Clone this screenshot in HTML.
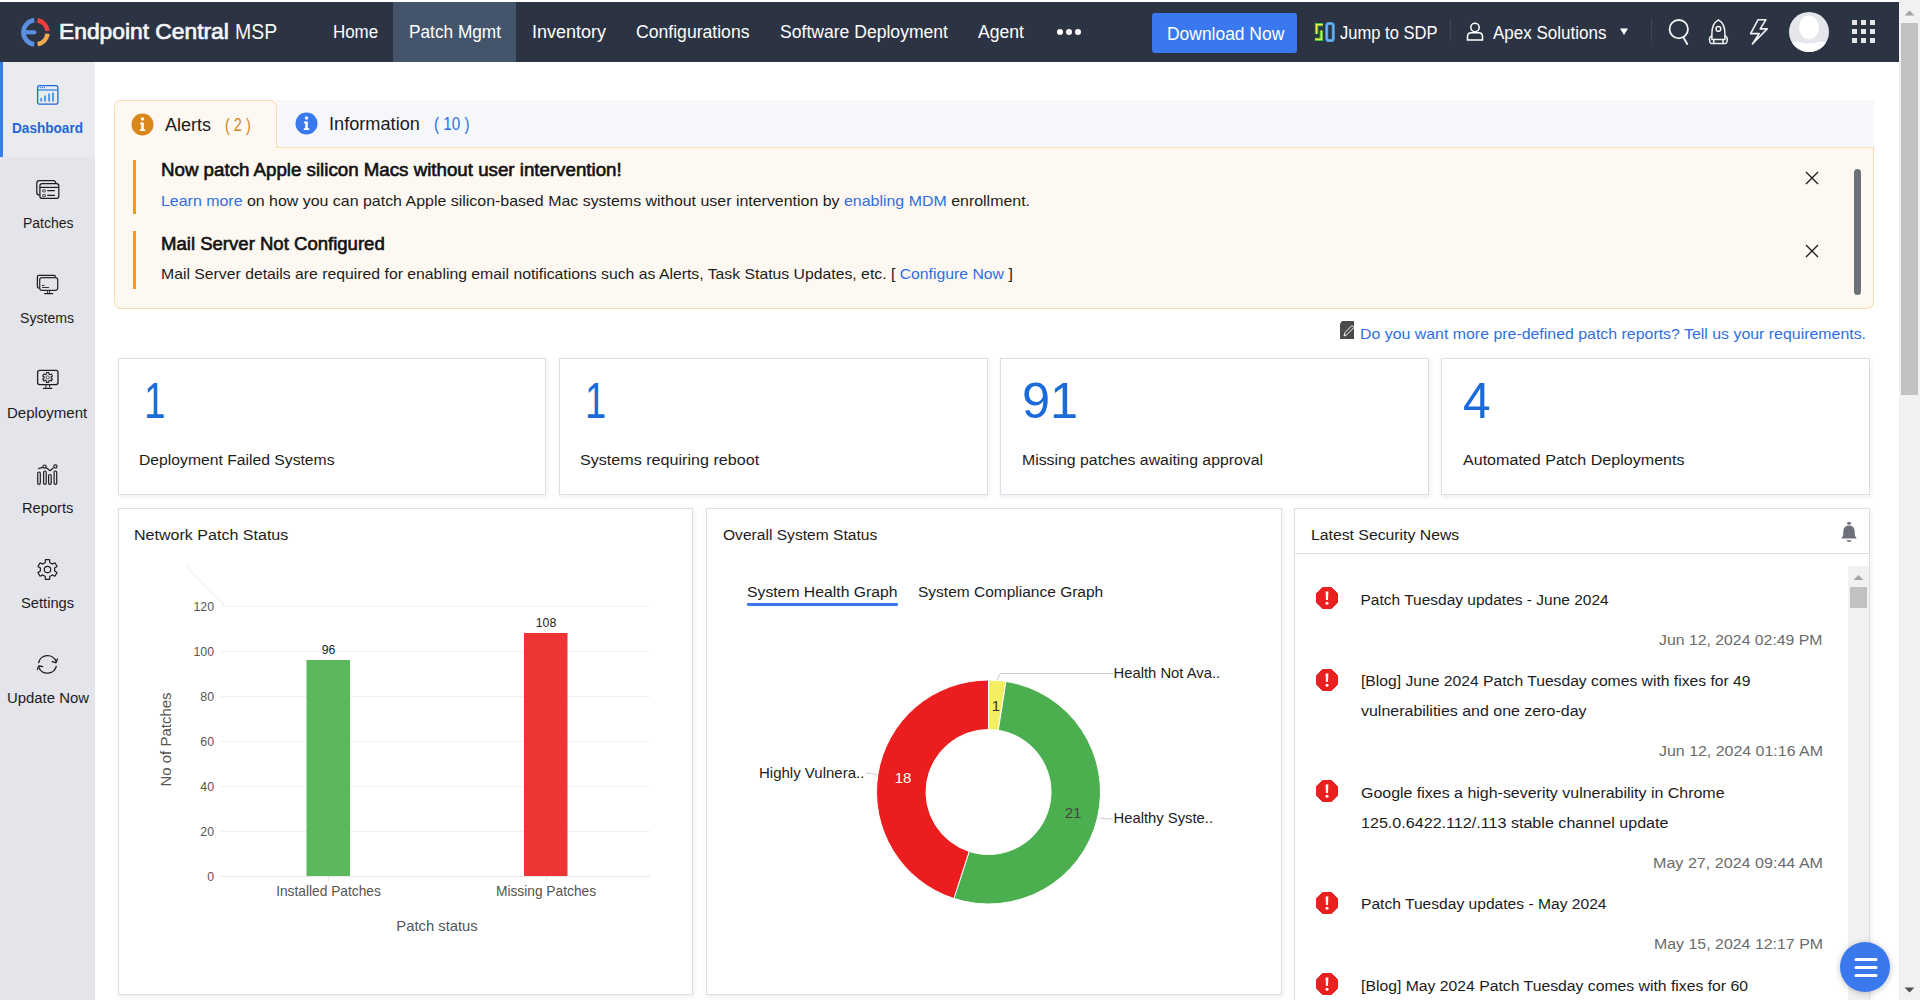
<!DOCTYPE html>
<html><head><meta charset="utf-8"><title>Endpoint Central MSP</title>
<style>
*{box-sizing:border-box}
html,body{margin:0;padding:0;width:1920px;height:1000px;overflow:hidden;background:#fff;font-family:"Liberation Sans",sans-serif}
.t{position:absolute;white-space:nowrap;transform-origin:0 0}
.a{position:absolute}
</style></head><body>
<div class="a" style="left:0;top:0;width:1899px;height:2px;background:#fff"></div><div class="a" style="left:0;top:2px;width:1899px;height:60px;background:#2c3444"></div><div class="a" style="left:393px;top:2px;width:123px;height:60px;background:#44546a"></div><svg class="a" style="left:15px;top:12px" width="40" height="40" viewBox="0 0 40 40"><path d="M19.24 32.33 A12.10 12.10 0 0 1 19.24 8.27" fill="none" stroke="#5a8fe2" stroke-width="4.6"/><path d="M22.60 8.38 A12.10 12.10 0 0 1 32.53 19.04" fill="none" stroke="#ef3f3c" stroke-width="4.6"/><path d="M32.51 21.77 A12.10 12.10 0 0 1 22.60 32.22" fill="none" stroke="#f1aa4c" stroke-width="4.6"/><path d="M8 20.30 H19.3" stroke="#5a8fe2" stroke-width="4.2"/><circle cx="19.3" cy="20.30" r="2.1" fill="#5a8fe2"/></svg><div class="t" style="left:58.60px;top:22.00px;font-size:21.5px;line-height:21.5px;font-weight:normal;color:#f6f6f6;transform:scaleX(1.0603);-webkit-text-stroke:0.7px #f6f6f6;">Endpoint Central</div>
<div class="t" style="left:234.80px;top:22.00px;font-size:21.5px;line-height:21.5px;font-weight:normal;color:#f6f6f6;transform:scaleX(0.9056);">MSP</div>
<div class="t" style="left:332.90px;top:24.00px;font-size:17.5px;line-height:17.5px;font-weight:normal;color:#fff;transform:scaleX(0.9657);">Home</div>
<div class="t" style="left:409.00px;top:24.00px;font-size:17.5px;line-height:17.5px;font-weight:normal;color:#fff;transform:scaleX(0.9855);">Patch Mgmt</div>
<div class="t" style="left:532.00px;top:24.00px;font-size:17.5px;line-height:17.5px;font-weight:normal;color:#fff;transform:scaleX(1.0278);">Inventory</div>
<div class="t" style="left:636.00px;top:24.00px;font-size:17.5px;line-height:17.5px;font-weight:normal;color:#fff;transform:scaleX(1.0058);">Configurations</div>
<div class="t" style="left:779.50px;top:24.00px;font-size:17.5px;line-height:17.5px;font-weight:normal;color:#fff;transform:scaleX(1.0042);">Software Deployment</div>
<div class="t" style="left:978.00px;top:24.00px;font-size:17.5px;line-height:17.5px;font-weight:normal;color:#fff;transform:scaleX(1.0055);">Agent</div>
<div class="a" style="left:1057px;top:29px;width:6px;height:6px;border-radius:3px;background:#fff"></div><div class="a" style="left:1066px;top:29px;width:6px;height:6px;border-radius:3px;background:#fff"></div><div class="a" style="left:1075px;top:29px;width:6px;height:6px;border-radius:3px;background:#fff"></div><div class="a" style="left:1152px;top:13px;width:145px;height:40px;border-radius:3px;background:#3a78f0"></div><div class="t" style="left:1166.70px;top:26.00px;font-size:17.5px;line-height:17.5px;font-weight:normal;color:#fff;transform:scaleX(0.9962);">Download Now</div>
<svg class="a" style="left:1313px;top:21px" width="24" height="23" viewBox="0 0 24 23">
<path d="M3.6 13 V3.6 H10" fill="none" stroke="#45c13a" stroke-width="3.4"/>
<path d="M8.4 9.6 V18.4 H2" fill="none" stroke="#45c13a" stroke-width="3.4"/>
<path d="M3.6 13 V3.6 H10 M8.4 9.6 V18.4 H2" fill="none" stroke="#f4ec4c" stroke-width="1.3"/>
<rect x="13.7" y="2.6" width="6.6" height="17" rx="2.2" fill="none" stroke="#4a9ee6" stroke-width="3"/>
<rect x="13.7" y="2.6" width="6.6" height="17" rx="2.2" fill="none" stroke="#7cbcf0" stroke-width="1"/>
</svg><div class="t" style="left:1340.00px;top:25.00px;font-size:17.5px;line-height:17.5px;font-weight:normal;color:#fff;transform:scaleX(0.9457);">Jump to SDP</div>
<div class="a" style="left:1450px;top:20px;width:1px;height:22px;border-left:1px dotted #556"></div><svg class="a" style="left:1466px;top:22px" width="18" height="19" viewBox="0 0 18 19">
<circle cx="9" cy="5.5" r="4.2" fill="none" stroke="#fff" stroke-width="1.5"/>
<path d="M1.5 18 V14.5 Q1.5 10.8 5.5 10.8 H12.5 Q16.5 10.8 16.5 14.5 V18 Z" fill="none" stroke="#fff" stroke-width="1.5"/>
</svg><div class="t" style="left:1492.50px;top:25.00px;font-size:17.5px;line-height:17.5px;font-weight:normal;color:#fff;transform:scaleX(0.9722);">Apex Solutions</div>
<svg class="a" style="left:1617px;top:27px" width="14" height="10" viewBox="0 0 14 10"><path d="M3 1.5 L11 1.5 L7 8 Z" fill="#fff"/></svg><div class="a" style="left:1651px;top:20px;width:1px;height:22px;border-left:1px dotted #556"></div><svg class="a" style="left:1660px;top:12px" width="120" height="40" viewBox="1660 12 120 40">
<circle cx="1678.75" cy="29.2" r="9.2" fill="none" stroke="#f2f2f2" stroke-width="1.8"/>
<path d="M1683.6 37.6 L1687.2 44" stroke="#f2f2f2" stroke-width="1.9" stroke-linecap="round"/>
<path d="M1718.4 19.8 C1714.2 22.2 1711.9 27 1711.9 33.2 V39.6 H1724.9 V33.2 C1724.9 27 1722.6 22.2 1718.4 19.8 Z" fill="none" stroke="#f2f2f2" stroke-width="1.5" stroke-linejoin="round"/>
<circle cx="1718.4" cy="28.9" r="2.4" fill="none" stroke="#f2f2f2" stroke-width="1.4"/>
<path d="M1711.9 35.6 L1710 37.4 Q1709.3 38.2 1709.5 39.4 L1710 42.4 Q1710.3 43.5 1711.6 43.5 H1713.6 L1713.9 39.6" fill="none" stroke="#f2f2f2" stroke-width="1.5" stroke-linejoin="round"/>
<path d="M1724.9 35.6 L1726.8 37.4 Q1727.5 38.2 1727.3 39.4 L1726.8 42.4 Q1726.5 43.5 1725.2 43.5 H1723.2 L1722.9 39.6" fill="none" stroke="#f2f2f2" stroke-width="1.5" stroke-linejoin="round"/>
<path d="M1713.6 43.5 H1723.2" stroke="#f2f2f2" stroke-width="1.5"/>
<path d="M1758 19.8 H1765.8 L1760.2 28.9 H1767.2 L1752.4 44 L1759.2 33.6 H1750.6 Z" fill="none" stroke="#f2f2f2" stroke-width="1.6" stroke-linejoin="round"/>
</svg><svg class="a" style="left:1789px;top:12px" width="40" height="40" viewBox="0 0 40 40">
<defs><clipPath id="av"><circle cx="20" cy="20" r="20"/></clipPath></defs>
<circle cx="20" cy="20" r="20" fill="#e4e6eb"/>
<g clip-path="url(#av)"><ellipse cx="20" cy="15.5" rx="9.8" ry="12" fill="#fff"/><path d="M0 44 V34 Q2 30 9 29.5 Q14 31.5 20 31.5 Q26 31.5 31 29.5 Q38 30 40 34 V44 Z" fill="#fff"/></g>
</svg><div class="a" style="left:1852px;top:20px;width:5px;height:5px;background:#e6e6ea"></div><div class="a" style="left:1861px;top:20px;width:5px;height:5px;background:#e6e6ea"></div><div class="a" style="left:1870px;top:20px;width:5px;height:5px;background:#e6e6ea"></div><div class="a" style="left:1852px;top:29px;width:5px;height:5px;background:#e6e6ea"></div><div class="a" style="left:1861px;top:29px;width:5px;height:5px;background:#e6e6ea"></div><div class="a" style="left:1870px;top:29px;width:5px;height:5px;background:#e6e6ea"></div><div class="a" style="left:1852px;top:38px;width:5px;height:5px;background:#e6e6ea"></div><div class="a" style="left:1861px;top:38px;width:5px;height:5px;background:#e6e6ea"></div><div class="a" style="left:1870px;top:38px;width:5px;height:5px;background:#e6e6ea"></div><div class="a" style="left:1899px;top:0;width:21px;height:1000px;background:#f1f1f1"></div><div class="a" style="left:1901px;top:23px;width:17px;height:372px;background:#c1c1c1"></div><svg class="a" style="left:1899px;top:0" width="21" height="20" viewBox="0 0 21 20"><path d="M5.5 15.5 L10.5 10.5 L15.5 15.5 Z" fill="#a3a3a3"/></svg><svg class="a" style="left:1899px;top:982px" width="21" height="20" viewBox="0 0 21 20"><path d="M5.5 5.5 L15.5 5.5 L10.5 10.5 Z" fill="#505050"/></svg><div class="a" style="left:0;top:62px;width:95px;height:938px;background:#e3e5ea"></div><div class="a" style="left:0;top:62px;width:95px;height:95px;background:#eaebef"></div><div class="a" style="left:0;top:62px;width:3px;height:95px;background:#3b7bf0"></div><svg class="a" style="left:30px;top:78px" width="35" height="35" viewBox="0 0 35 35">
<rect x="7.6" y="7.6" width="20.3" height="18.6" rx="1.8" fill="none" stroke="#1f66dc" stroke-width="1.3"/>
<path d="M7.6 12 H27.9" stroke="#3d8fe6" stroke-width="1.4"/>
<circle cx="10.3" cy="9.6" r="0.7" fill="#1f66dc"/><circle cx="12.4" cy="9.6" r="0.7" fill="#1f66dc"/><circle cx="14.4" cy="9.6" r="0.7" fill="#1f66dc"/>
<path d="M11.2 23.5 V20 M15.1 23.5 V17.4 M19.1 23.5 V15.4 M23 23.5 V14.4" stroke="#4a9ae6" stroke-width="1.9"/>
</svg><svg class="a" style="left:30px;top:172px" width="35" height="35" viewBox="0 0 35 35">
<path d="M9.5 23.2 Q6.8 23.2 6.8 20.5 V11.2 Q6.8 8.5 9.5 8.5 H23.3 Q25.8 8.5 25.8 11.4" fill="none" stroke="#1e1e1e" stroke-width="1.25"/>
<rect x="9.9" y="11.6" width="18.9" height="14.8" rx="2.2" fill="none" stroke="#1e1e1e" stroke-width="1.25"/>
<path d="M9.9 15.4 H28.8" stroke="#1e1e1e" stroke-width="1.2"/>
<rect x="12.6" y="17.8" width="2.8" height="2.1" rx="0.5" fill="none" stroke="#333" stroke-width="0.9"/>
<rect x="12.6" y="22.6" width="2.8" height="2.1" rx="0.5" fill="none" stroke="#333" stroke-width="0.9"/>
<path d="M17.3 18.6 H24.9 M17.3 23.4 H24.9" stroke="#1e1e1e" stroke-width="1.2"/>
</svg><svg class="a" style="left:30px;top:267px" width="35" height="35" viewBox="0 0 35 35">
<path d="M9 21 Q7.4 21 7.4 19.4 V9.8 Q7.4 8.3 9 8.3 H24.5 Q25.3 8.3 25.3 10" fill="none" stroke="#1e1e1e" stroke-width="1.25"/>
<rect x="9.7" y="10.5" width="18" height="12.8" rx="2.2" fill="none" stroke="#2a2a2a" stroke-width="1.25"/>
<path d="M17.6 23.3 V26 M19.6 23.3 V26" stroke="#333" stroke-width="1"/>
<path d="M14.6 26.6 H22.6" stroke="#1e1e1e" stroke-width="1.4" stroke-linecap="round"/>
<path d="M12 18.5 H14.6 M12 20.5 H19" stroke="#333" stroke-width="1"/>
</svg><svg class="a" style="left:30px;top:360px" width="35" height="35" viewBox="0 0 35 35">
<rect x="7.6" y="10.3" width="20.4" height="14.3" rx="2" fill="none" stroke="#1e1e1e" stroke-width="1.3"/>
<path d="M15.8 24.6 V27.6 M19.6 24.6 V27.6" stroke="#333" stroke-width="1.1"/>
<path d="M13.6 28.4 H21.6" stroke="#1e1e1e" stroke-width="1.4" stroke-linecap="round"/>
<path d="M15.80 14.28 L16.33 14.03 L16.44 12.43 L18.76 12.43 L18.87 14.03 L19.40 14.28 L19.88 14.62 L21.32 13.91 L22.48 15.93 L21.15 16.81 L21.20 17.40 L21.15 17.99 L22.48 18.87 L21.32 20.89 L19.88 20.18 L19.40 20.52 L18.87 20.77 L18.76 22.37 L16.44 22.37 L16.33 20.77 L15.80 20.52 L15.32 20.18 L13.88 20.89 L12.72 18.87 L14.05 17.99 L14.00 17.40 L14.05 16.81 L12.72 15.93 L13.88 13.91 L15.32 14.62 Z" fill="none" stroke="#1e1e1e" stroke-width="1.1" stroke-linejoin="round"/>
<circle cx="17.6" cy="17.4" r="1.6" fill="none" stroke="#444" stroke-width="0.9"/>
</svg><svg class="a" style="left:30px;top:457px" width="35" height="35" viewBox="0 0 35 35">
<rect x="7.7" y="15" width="2.6" height="12.4" rx="1.3" fill="none" stroke="#1e1e1e" stroke-width="1.2"/>
<rect x="13.6" y="14" width="2.6" height="13.4" rx="1.3" fill="none" stroke="#1e1e1e" stroke-width="1.2"/>
<rect x="18.6" y="17.5" width="2.6" height="9.9" rx="1.3" fill="none" stroke="#1e1e1e" stroke-width="1.2"/>
<rect x="24.1" y="14" width="2.6" height="13.4" rx="1.3" fill="none" stroke="#1e1e1e" stroke-width="1.2"/>
<path d="M8.3 11.6 L12.8 10.3 M16 10.5 L20 13.8 L23.6 10.6" fill="none" stroke="#1e1e1e" stroke-width="1.2"/>
<circle cx="14.5" cy="9.6" r="1.6" fill="none" stroke="#1e1e1e" stroke-width="1.2"/>
<circle cx="25.4" cy="9.4" r="1.6" fill="none" stroke="#1e1e1e" stroke-width="1.2"/>
</svg><svg class="a" style="left:30px;top:552px" width="35" height="35" viewBox="0 0 35 35">
<path d="M13.90 11.26 L15.19 10.68 L15.42 7.72 L19.58 7.72 L19.81 10.68 L21.10 11.26 L22.25 12.09 L24.93 10.81 L27.01 14.41 L24.56 16.10 L24.70 17.50 L24.56 18.90 L27.01 20.59 L24.93 24.19 L22.25 22.91 L21.10 23.74 L19.81 24.32 L19.58 27.28 L15.42 27.28 L15.19 24.32 L13.90 23.74 L12.75 22.91 L10.07 24.19 L7.99 20.59 L10.44 18.90 L10.30 17.50 L10.44 16.10 L7.99 14.41 L10.07 10.81 L12.75 12.09 Z" fill="none" stroke="#1e1e1e" stroke-width="1.2" stroke-linejoin="round"/>
<circle cx="17.5" cy="17.5" r="3.2" fill="none" stroke="#1e1e1e" stroke-width="1.2"/>
</svg><svg class="a" style="left:30px;top:647px" width="35" height="35" viewBox="0 0 35 35">
<path d="M8.5 16.2 A9.2 9.2 0 0 1 26.2 14.6" fill="none" stroke="#1e1e1e" stroke-width="1.3"/>
<path d="M26.4 18.8 A9.2 9.2 0 0 1 8.9 20.4" fill="none" stroke="#1e1e1e" stroke-width="1.3"/>
<path d="M21.6 14.4 L26 15.8 L27.6 11.6" fill="none" stroke="#1e1e1e" stroke-width="1.3" stroke-linejoin="round"/>
<path d="M13.2 19.6 L8.8 19 L7.2 22.8" fill="none" stroke="#1e1e1e" stroke-width="1.3" stroke-linejoin="round"/>
</svg><div class="t" style="left:12.00px;top:120.00px;font-size:15.5px;line-height:15.5px;font-weight:bold;color:#1f66dc;transform:scaleX(0.8771);">Dashboard</div>
<div class="t" style="left:22.50px;top:215.00px;font-size:15.5px;line-height:15.5px;font-weight:normal;color:#1c1c1c;transform:scaleX(0.9018);">Patches</div>
<div class="t" style="left:20.40px;top:310.00px;font-size:15.5px;line-height:15.5px;font-weight:normal;color:#1c1c1c;transform:scaleX(0.9100);">Systems</div>
<div class="t" style="left:7.20px;top:405.00px;font-size:15.5px;line-height:15.5px;font-weight:normal;color:#1c1c1c;transform:scaleX(0.9698);">Deployment</div>
<div class="t" style="left:21.60px;top:500.00px;font-size:15.5px;line-height:15.5px;font-weight:normal;color:#1c1c1c;transform:scaleX(0.9475);">Reports</div>
<div class="t" style="left:20.90px;top:595.00px;font-size:15.5px;line-height:15.5px;font-weight:normal;color:#1c1c1c;transform:scaleX(0.9482);">Settings</div>
<div class="t" style="left:6.50px;top:690.00px;font-size:15.5px;line-height:15.5px;font-weight:normal;color:#1c1c1c;transform:scaleX(0.9607);">Update Now</div>
<div class="a" style="left:276px;top:100px;width:1598px;height:48px;background:#f6f7fb"></div><div class="a" style="left:114px;top:147px;width:1760px;height:162px;background:#fdf8f1;border:1px solid #f9dcb0;border-top:none;border-radius:0 0 7px 7px"></div><div class="a" style="left:276px;top:147px;width:1598px;height:1px;background:#f9dcb0"></div><div class="a" style="left:114px;top:100px;width:163px;height:48px;background:#fdf8f1;border:1px solid #f9dcb0;border-bottom:none;border-radius:7px 7px 0 0"></div><svg class="a" style="left:131px;top:113px" width="23" height="23" viewBox="0 0 23 23">
<circle cx="11.5" cy="11.5" r="11" fill="#d9861b"/>
<circle cx="11.5" cy="6" r="1.7" fill="#fff"/>
<path d="M9 9.5 H12.8 V16.3 H14.2 V18 H8.8 V16.3 H10.2 V11.2 H9 Z" fill="#fff"/>
</svg><svg class="a" style="left:295px;top:112px" width="23" height="23" viewBox="0 0 23 23">
<circle cx="11.5" cy="11.5" r="11" fill="#3a78ee"/>
<circle cx="11.5" cy="6" r="1.7" fill="#fff"/>
<path d="M9 9.5 H12.8 V16.3 H14.2 V18 H8.8 V16.3 H10.2 V11.2 H9 Z" fill="#fff"/>
</svg><div class="t" style="left:165.20px;top:117.00px;font-size:17.5px;line-height:17.5px;font-weight:normal;color:#1a1a1a;transform:scaleX(1.0291);">Alerts</div>
<div class="t" style="left:224.60px;top:117.00px;font-size:17.5px;line-height:17.5px;font-weight:normal;color:#d9861b;transform:scaleX(0.8264);">( 2 )</div>
<div class="t" style="left:328.70px;top:116.00px;font-size:17.5px;line-height:17.5px;font-weight:normal;color:#1a1a1a;transform:scaleX(1.0383);">Information</div>
<div class="t" style="left:433.50px;top:116.00px;font-size:17.5px;line-height:17.5px;font-weight:normal;color:#2f6fe0;transform:scaleX(0.8690);">( 10 )</div>
<div class="a" style="left:133px;top:160px;width:3px;height:54px;background:#f5962a"></div><div class="a" style="left:133px;top:231px;width:3px;height:58px;background:#f5962a"></div><div class="t" style="left:161.25px;top:161.00px;font-size:18px;line-height:18px;font-weight:normal;color:#111;transform:scaleX(1.0393);-webkit-text-stroke:0.6px #111;">Now patch Apple silicon Macs without user intervention!</div>
<div class="t" style="left:161.25px;top:193.00px;font-size:15px;line-height:15px;font-weight:normal;color:#1c1c1c;transform:scaleX(1.0624);"><span style="color:#2f6fe0">Learn more</span> on how you can patch Apple silicon-based Mac systems without user intervention by <span style="color:#2f6fe0">enabling MDM</span> enrollment.</div>
<div class="t" style="left:161.25px;top:235.00px;font-size:18px;line-height:18px;font-weight:normal;color:#111;transform:scaleX(1.0306);-webkit-text-stroke:0.6px #111;">Mail Server Not Configured</div>
<div class="t" style="left:161.25px;top:266.00px;font-size:15px;line-height:15px;font-weight:normal;color:#1c1c1c;transform:scaleX(1.0514);">Mail Server details are required for enabling email notifications such as Alerts, Task Status Updates, etc. [ <span style="color:#2f6fe0">Configure Now</span> ]</div>
<svg class="a" style="left:1805px;top:171px" width="14" height="14" viewBox="0 0 14 14"><path d="M1 1 L13 13 M13 1 L1 13" stroke="#222" stroke-width="1.4"/></svg><svg class="a" style="left:1805px;top:244px" width="14" height="14" viewBox="0 0 14 14"><path d="M1 1 L13 13 M13 1 L1 13" stroke="#222" stroke-width="1.4"/></svg><div class="a" style="left:1854px;top:169px;width:7px;height:126px;border-radius:4px;background:#6e7079"></div><svg class="a" style="left:1339px;top:320px" width="17" height="20" viewBox="0 0 17 20">
<path d="M3 1 H15 V19 H1 V4 Z" fill="#4a4a4a"/>
<path d="M5 16 L6 12.5 L13 5.5 L15 7.5 L8 14.5 Z" fill="none" stroke="#fff" stroke-width="1"/>
</svg><div class="t" style="left:1360.00px;top:326.00px;font-size:15px;line-height:15px;font-weight:normal;color:#2f6fe0;transform:scaleX(1.0598);">Do you want more pre-defined patch reports? Tell us your requirements.</div>
<div class="a" style="left:118px;top:358px;width:428px;height:137px;background:#fff;border:1px solid #dcdde6;box-shadow:1px 2px 5px rgba(0,0,0,0.07)"></div><div class="t" style="left:143.60px;top:376.00px;font-size:50.5px;line-height:50.5px;font-weight:normal;color:#1a6ad9;transform:scaleX(0.7616);">1</div>
<div class="t" style="left:138.90px;top:452.00px;font-size:15.5px;line-height:15.5px;font-weight:normal;color:#1c1c1c;transform:scaleX(1.0132);">Deployment Failed Systems</div>
<div class="a" style="left:559px;top:358px;width:429px;height:137px;background:#fff;border:1px solid #dcdde6;box-shadow:1px 2px 5px rgba(0,0,0,0.07)"></div><div class="t" style="left:584.80px;top:376.00px;font-size:50.5px;line-height:50.5px;font-weight:normal;color:#1a6ad9;transform:scaleX(0.7544);">1</div>
<div class="t" style="left:579.60px;top:452.00px;font-size:15.5px;line-height:15.5px;font-weight:normal;color:#1c1c1c;transform:scaleX(1.0395);">Systems requiring reboot</div>
<div class="a" style="left:1000px;top:358px;width:429px;height:137px;background:#fff;border:1px solid #dcdde6;box-shadow:1px 2px 5px rgba(0,0,0,0.07)"></div><div class="t" style="left:1022.00px;top:376.00px;font-size:50.5px;line-height:50.5px;font-weight:normal;color:#1a6ad9;">91</div>
<div class="t" style="left:1022.00px;top:452.00px;font-size:15.5px;line-height:15.5px;font-weight:normal;color:#1c1c1c;transform:scaleX(1.0210);">Missing patches awaiting approval</div>
<div class="a" style="left:1441px;top:358px;width:429px;height:137px;background:#fff;border:1px solid #dcdde6;box-shadow:1px 2px 5px rgba(0,0,0,0.07)"></div><div class="t" style="left:1463.00px;top:376.00px;font-size:50.5px;line-height:50.5px;font-weight:normal;color:#1a6ad9;transform:scaleX(0.9822);">4</div>
<div class="t" style="left:1462.50px;top:452.00px;font-size:15.5px;line-height:15.5px;font-weight:normal;color:#1c1c1c;transform:scaleX(1.0367);">Automated Patch Deployments</div>
<div class="a" style="left:118px;top:508px;width:575px;height:487px;background:#fff;border:1px solid #dcdde6;box-shadow:1px 2px 5px rgba(0,0,0,0.07)"></div><div class="a" style="left:706px;top:508px;width:576px;height:487px;background:#fff;border:1px solid #dcdde6;box-shadow:1px 2px 5px rgba(0,0,0,0.07)"></div><div class="a" style="left:1294px;top:508px;width:576px;height:520px;background:#fff;border:1px solid #dcdde6;box-shadow:1px 2px 5px rgba(0,0,0,0.07)"></div><div class="t" style="left:134.00px;top:527.00px;font-size:15.5px;line-height:15.5px;font-weight:normal;color:#1c1c1c;transform:scaleX(1.0352);">Network Patch Status</div>
<div class="t" style="left:722.50px;top:527.00px;font-size:15.5px;line-height:15.5px;font-weight:normal;color:#1c1c1c;transform:scaleX(1.0055);">Overall System Status</div>
<div class="t" style="left:1311.20px;top:527.00px;font-size:15.5px;line-height:15.5px;font-weight:normal;color:#1c1c1c;transform:scaleX(1.0179);">Latest Security News</div>
<div class="a" style="left:1295px;top:553px;width:574px;height:1px;background:#dcdde6"></div><svg class="a" style="left:1830px;top:512px" width="40" height="40" viewBox="0 0 40 40">
<ellipse cx="19" cy="11.4" rx="2" ry="1.3" fill="#6d707a"/>
<path d="M19 13.6 C15.5 13.6 13.6 15.6 13.4 19 L13.1 23.5 L11.3 26.6 H26.7 L24.9 23.5 L24.6 19 C24.4 15.6 22.5 13.6 19 13.6 Z" fill="#6d707a"/>
<path d="M16.2 28.2 H21.8 Q21 30 19 30 Q17 30 16.2 28.2 Z" fill="#6d707a"/>
</svg><svg class="a" style="left:0;top:0" width="1920" height="1000" viewBox="0 0 1920 1000" font-family="Liberation Sans">
<path d="M186 566 L224 605" stroke="#e6e6e6" stroke-width="1"/>
<path d="M221 606.5 H650" stroke="#f0f0f0" stroke-width="1"/>
<text x="214" y="610.5" font-size="12.3" fill="#555" text-anchor="end">120</text>
<path d="M221 651.5 H650" stroke="#f0f0f0" stroke-width="1"/>
<text x="214" y="655.5" font-size="12.3" fill="#555" text-anchor="end">100</text>
<path d="M221 696.5 H650" stroke="#f0f0f0" stroke-width="1"/>
<text x="214" y="700.5" font-size="12.3" fill="#555" text-anchor="end">80</text>
<path d="M221 741.5 H650" stroke="#f0f0f0" stroke-width="1"/>
<text x="214" y="745.5" font-size="12.3" fill="#555" text-anchor="end">60</text>
<path d="M221 786.5 H650" stroke="#f0f0f0" stroke-width="1"/>
<text x="214" y="790.5" font-size="12.3" fill="#555" text-anchor="end">40</text>
<path d="M221 831.5 H650" stroke="#f0f0f0" stroke-width="1"/>
<text x="214" y="835.5" font-size="12.3" fill="#555" text-anchor="end">20</text>
<path d="M221 876.5 H650" stroke="#e6e6e6" stroke-width="1"/>
<text x="214" y="880.5" font-size="12.3" fill="#555" text-anchor="end">0</text>
<path d="M328.5 876 V881 M546.5 876 V881" stroke="#e6e6e6" stroke-width="1"/>
<rect x="306.5" y="660" width="43.5" height="216" fill="#5cb85c"/>
<rect x="524" y="633" width="43.5" height="243" fill="#ee3535"/>
<text x="328.5" y="654" font-size="12.3" fill="#222" text-anchor="middle">96</text>
<text x="546" y="627" font-size="12.3" fill="#222" text-anchor="middle">108</text>
<text x="328.5" y="896" font-size="13.75" fill="#555" text-anchor="middle">Installed Patches</text>
<text x="546" y="896" font-size="13.75" fill="#555" text-anchor="middle">Missing Patches</text>
<text x="437" y="930.5" font-size="14.8" fill="#555" text-anchor="middle">Patch status</text>
<text transform="translate(170.5,739.5) rotate(-90)" font-size="15" fill="#555" text-anchor="middle">No of Patches</text>
<path d="M988.50 680.00 A112 112 0 0 1 1006.02 681.38 L998.28 730.27 A62.5 62.5 0 0 0 988.50 729.50 Z" fill="#f3ee62" stroke="#fff" stroke-width="1"/>
<path d="M1006.02 681.38 A112 112 0 1 1 953.89 898.52 L969.19 851.44 A62.5 62.5 0 1 0 998.28 730.27 Z" fill="#4caf4f" stroke="#fff" stroke-width="1"/>
<path d="M953.89 898.52 A112 112 0 0 1 988.50 680.00 L988.50 729.50 A62.5 62.5 0 0 0 969.19 851.44 Z" fill="#ec1d1f" stroke="#fff" stroke-width="1"/>
<text x="996" y="710.5" font-size="15" fill="#333" text-anchor="middle">1</text>
<text x="903" y="782.5" font-size="15" fill="#fff" text-anchor="middle">18</text>
<text x="1073" y="817.5" font-size="15" fill="#444" text-anchor="middle">21</text>
<path d="M997 680 L1000 673.5 H1113" fill="none" stroke="#ccc" stroke-width="1"/>
<path d="M1100 818 Q1104 819 1113 819" fill="none" stroke="#ccc" stroke-width="1"/>
<path d="M866 773 Q872 773 877 775" fill="none" stroke="#ccc" stroke-width="1"/>
<text x="1113.5" y="677.5" font-size="14.8" fill="#222">Health Not Ava..</text>
<text x="1113.5" y="823" font-size="14.8" fill="#222">Healthy Syste..</text>
<text x="759" y="777.5" font-size="15" fill="#222">Highly Vulnera..</text>
</svg><div class="t" style="left:747.00px;top:584.00px;font-size:15.5px;line-height:15.5px;font-weight:normal;color:#1c1c1c;transform:scaleX(1.0159);">System Health Graph</div>
<div class="t" style="left:918.00px;top:584.00px;font-size:15.5px;line-height:15.5px;font-weight:normal;color:#1c1c1c;">System Compliance Graph</div>
<div class="a" style="left:747px;top:603px;width:151px;height:3px;background:#3a78ee;border-radius:1px"></div><svg class="a" style="left:1316.0px;top:587.0px" width="22" height="22" viewBox="0 0 22 22"><path d="M6.5 0.5 H15.5 L21.5 6.5 V15.5 L15.5 21.5 H6.5 L0.5 15.5 V6.5 Z" fill="#e8201f" stroke="#e8201f" stroke-width="1" stroke-linejoin="round"/><path d="M9.6 4.5 H12.4 L12 13 H10 Z" fill="#fff"/><circle cx="11" cy="16.3" r="1.5" fill="#fff"/></svg><div class="t" style="left:1360.50px;top:592.00px;font-size:15.5px;line-height:15.5px;font-weight:normal;color:#1c1c1c;">Patch Tuesday updates - June 2024</div>
<div class="t" style="left:1659.00px;top:632.00px;font-size:15.5px;line-height:15.5px;font-weight:normal;color:#6b6b6b;transform:scaleX(1.0200);">Jun 12, 2024 02:49 PM</div>
<svg class="a" style="left:1316.0px;top:669.0px" width="22" height="22" viewBox="0 0 22 22"><path d="M6.5 0.5 H15.5 L21.5 6.5 V15.5 L15.5 21.5 H6.5 L0.5 15.5 V6.5 Z" fill="#e8201f" stroke="#e8201f" stroke-width="1" stroke-linejoin="round"/><path d="M9.6 4.5 H12.4 L12 13 H10 Z" fill="#fff"/><circle cx="11" cy="16.3" r="1.5" fill="#fff"/></svg><div class="t" style="left:1360.50px;top:673.00px;font-size:15.5px;line-height:15.5px;font-weight:normal;color:#1c1c1c;transform:scaleX(1.0113);">[Blog] June 2024 Patch Tuesday comes with fixes for 49</div>
<div class="t" style="left:1360.50px;top:703.00px;font-size:15.5px;line-height:15.5px;font-weight:normal;color:#1c1c1c;transform:scaleX(1.0304);">vulnerabilities and one zero-day</div>
<div class="t" style="left:1658.50px;top:743.00px;font-size:15.5px;line-height:15.5px;font-weight:normal;color:#6b6b6b;transform:scaleX(1.0285);">Jun 12, 2024 01:16 AM</div>
<svg class="a" style="left:1316.0px;top:780.0px" width="22" height="22" viewBox="0 0 22 22"><path d="M6.5 0.5 H15.5 L21.5 6.5 V15.5 L15.5 21.5 H6.5 L0.5 15.5 V6.5 Z" fill="#e8201f" stroke="#e8201f" stroke-width="1" stroke-linejoin="round"/><path d="M9.6 4.5 H12.4 L12 13 H10 Z" fill="#fff"/><circle cx="11" cy="16.3" r="1.5" fill="#fff"/></svg><div class="t" style="left:1360.50px;top:785.00px;font-size:15.5px;line-height:15.5px;font-weight:normal;color:#1c1c1c;transform:scaleX(1.0292);">Google fixes a high-severity vulnerability in Chrome</div>
<div class="t" style="left:1360.50px;top:815.00px;font-size:15.5px;line-height:15.5px;font-weight:normal;color:#1c1c1c;transform:scaleX(1.0392);">125.0.6422.112/.113 stable channel update</div>
<div class="t" style="left:1652.50px;top:855.00px;font-size:15.5px;line-height:15.5px;font-weight:normal;color:#6b6b6b;transform:scaleX(1.0385);">May 27, 2024 09:44 AM</div>
<svg class="a" style="left:1316.0px;top:892.0px" width="22" height="22" viewBox="0 0 22 22"><path d="M6.5 0.5 H15.5 L21.5 6.5 V15.5 L15.5 21.5 H6.5 L0.5 15.5 V6.5 Z" fill="#e8201f" stroke="#e8201f" stroke-width="1" stroke-linejoin="round"/><path d="M9.6 4.5 H12.4 L12 13 H10 Z" fill="#fff"/><circle cx="11" cy="16.3" r="1.5" fill="#fff"/></svg><div class="t" style="left:1360.50px;top:896.00px;font-size:15.5px;line-height:15.5px;font-weight:normal;color:#1c1c1c;transform:scaleX(1.0068);">Patch Tuesday updates - May 2024</div>
<div class="t" style="left:1653.50px;top:936.00px;font-size:15.5px;line-height:15.5px;font-weight:normal;color:#6b6b6b;transform:scaleX(1.0270);">May 15, 2024 12:17 PM</div>
<svg class="a" style="left:1316.0px;top:973.0px" width="22" height="22" viewBox="0 0 22 22"><path d="M6.5 0.5 H15.5 L21.5 6.5 V15.5 L15.5 21.5 H6.5 L0.5 15.5 V6.5 Z" fill="#e8201f" stroke="#e8201f" stroke-width="1" stroke-linejoin="round"/><path d="M9.6 4.5 H12.4 L12 13 H10 Z" fill="#fff"/><circle cx="11" cy="16.3" r="1.5" fill="#fff"/></svg><div class="t" style="left:1360.50px;top:978.00px;font-size:15.5px;line-height:15.5px;font-weight:normal;color:#1c1c1c;transform:scaleX(1.0163);">[Blog] May 2024 Patch Tuesday comes with fixes for 60</div>
<div class="a" style="left:1848px;top:566px;width:21px;height:434px;background:#f1f1f1"></div><svg class="a" style="left:1848px;top:566px" width="21" height="20" viewBox="0 0 21 20"><path d="M5.5 14 L10.5 9 L15.5 14 Z" fill="#a3a3a3"/></svg><div class="a" style="left:1850px;top:587px;width:17px;height:21px;background:#c1c1c1"></div><div class="a" style="left:1840px;top:942px;width:50px;height:50px;border-radius:25px;background:#3a78ee;box-shadow:0 1px 6px rgba(0,0,0,0.25)"></div>
<svg class="a" style="left:1840px;top:942px" width="50" height="50" viewBox="0 0 50 50"><path d="M16 17.5 H36 M16 25.5 H36 M16 33.5 H36" stroke="#fff" stroke-width="3" stroke-linecap="round"/></svg></body></html>
